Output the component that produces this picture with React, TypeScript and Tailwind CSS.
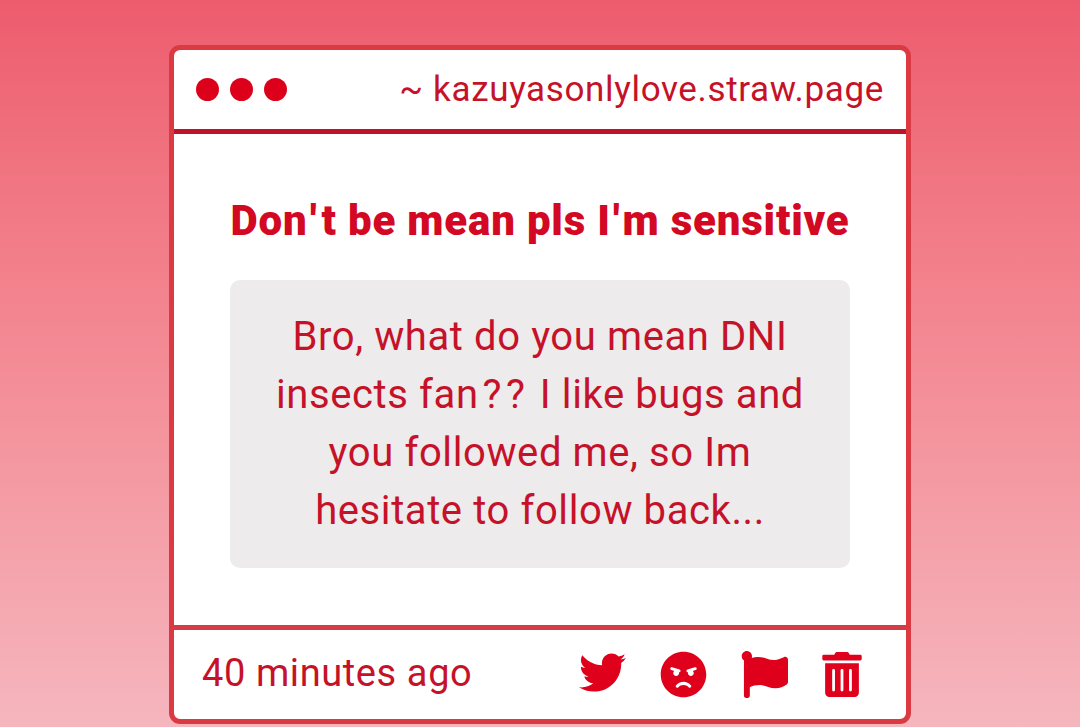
import { FaAngry, FaFlag, FaTrashAlt, FaTwitter } from 'react-icons/fa'

export default function App() {
  return (
    <main className="h-[727px] w-full overflow-hidden bg-linear-to-b from-[#ed5c6e] to-[#f5b6be] pt-[45px] font-['Roboto',sans-serif] text-[#c51229]">
      <div className="mx-auto flex h-[679px] w-[742px] flex-col rounded-[11px] border-5 border-[#dc3a43] bg-white">

        {/* Title bar */}
        <header className="flex h-[84px] shrink-0 items-center justify-between border-b-5 border-[#c01229] px-[22px]">
          <div className="flex gap-[11px] pb-px">
            {[0, 1, 2].map((dot) => (
              <span key={dot} className="size-[23px] rounded-full bg-[#dd001b]"></span>
            ))}
          </div>
          <span className="text-[35px] leading-[79px] tracking-[0.65px] whitespace-nowrap">~ kazuyasonlylove.straw.page</span>
        </header>

        {/* Question and message */}
        <section className="flex flex-1 flex-col px-14 pt-[57px]">
          <h1 className="flex h-[89px] justify-center text-[42px] leading-[60px] font-black tracking-[0.8px] whitespace-pre text-[#d30822]">
            Do<span className="tracking-[5px]">n'</span>t be mean pls <span className="tracking-[3px]">I'</span>m sensitive
          </h1>
          <p className="rounded-[10px] bg-[#eeebec] py-7 text-center text-[40px] leading-[58px] tracking-[0.6px] whitespace-nowrap">
            <span className="block">Bro, what do you mean DNI</span>
            <span className="block">insects fa<span className="tracking-[4.5px]">n??</span> I like bugs and</span>
            <span className="block">you followed me, so Im</span>
            <span className="block">hesitate to follow back...</span>
          </p>
        </section>

        {/* Footer */}
        <footer className="flex h-[94px] shrink-0 items-center justify-between border-t-5 border-[#d43c46] pr-[44px] pl-7">
          <span className="pb-[3px] text-[38px] leading-none tracking-[0.6px]">40 minutes ago</span>
          <div className="flex items-center gap-[34px] pb-px text-[#df001c]">
            <FaTwitter size={47} className="mb-1" />
            <FaAngry size={47} />
            <FaFlag size={47} />
            <FaTrashAlt className="h-[45px] w-[40px]" />
          </div>
        </footer>
      </div>
    </main>
  )
}
